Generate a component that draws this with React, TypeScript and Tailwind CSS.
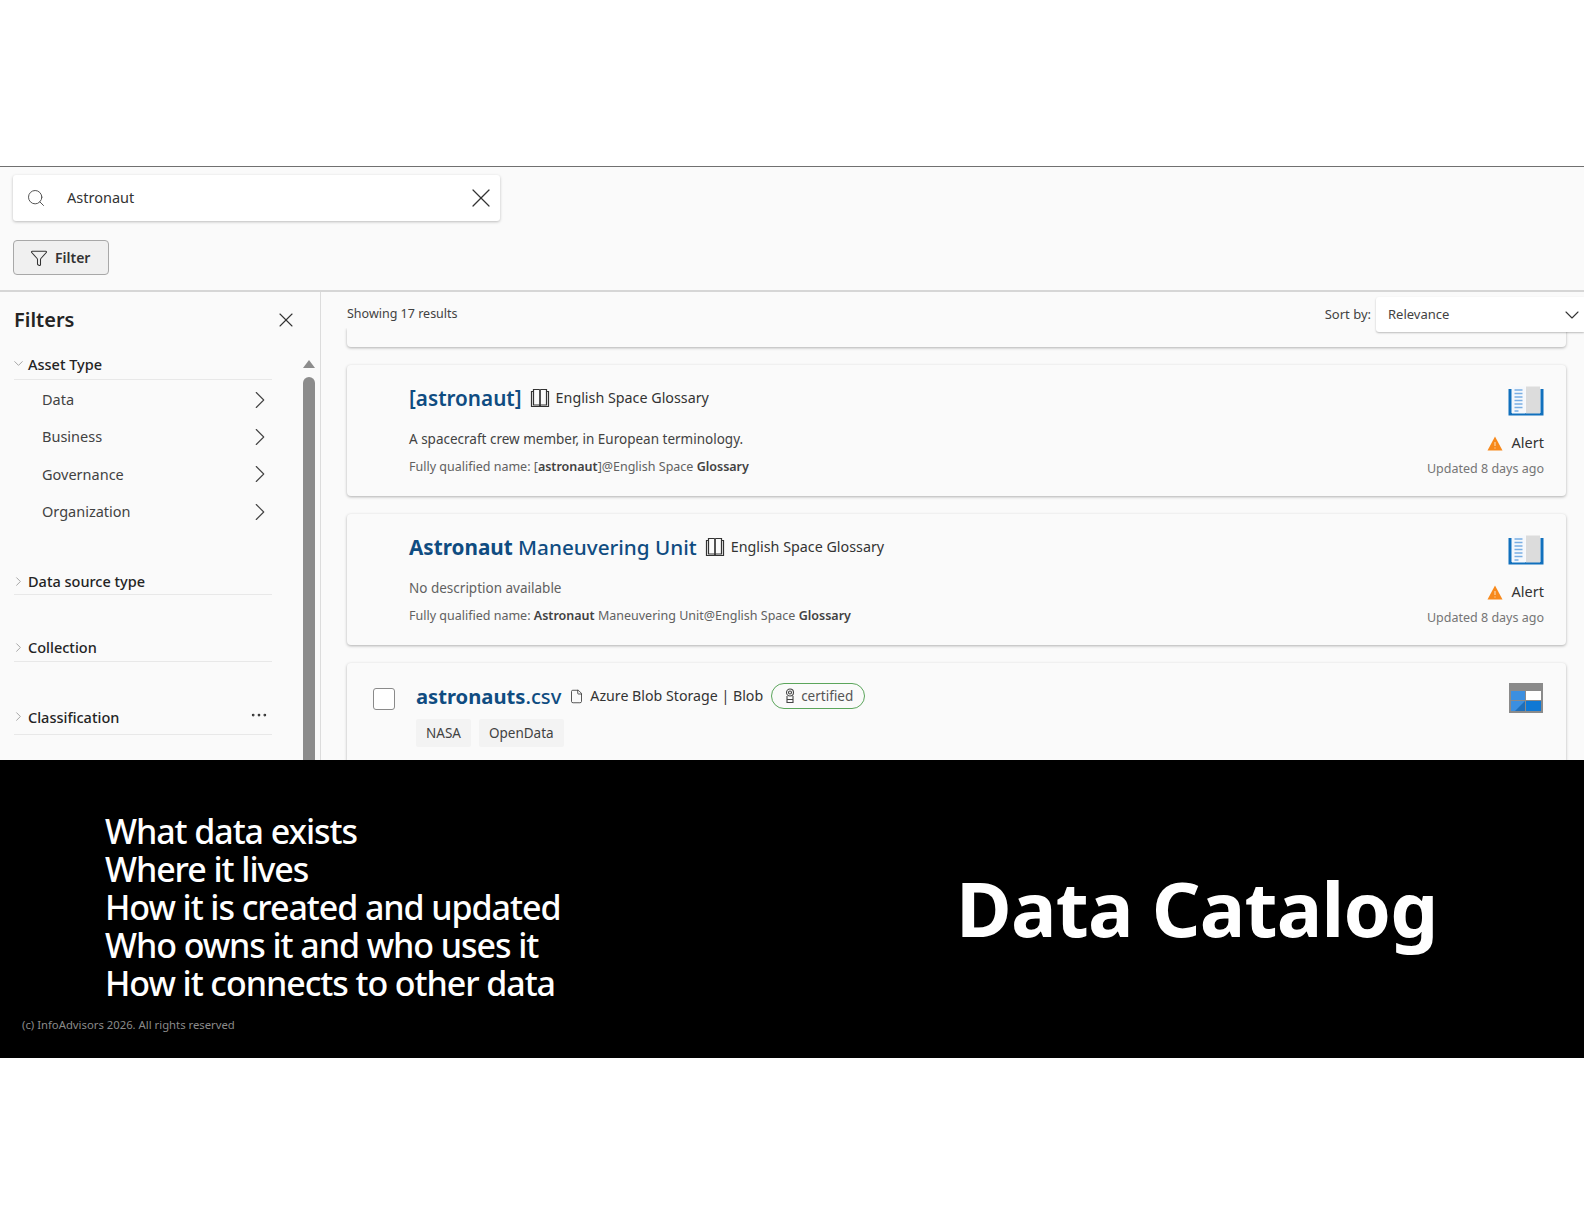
import { ChevronDown, ChevronRight, File, Filter, MoreHorizontal, Search, X } from 'lucide-react';

const ASSET_TYPES = ['Data', 'Business', 'Governance', 'Organization'];

function GlossaryIcon() {
  return (
    <svg width="36" height="31" viewBox="0 0 36 31">
      <path d="M0.500 3v26.500h35V3h-3v24H3.500V3z" fill="#1170bd" />
      <path d="M4 0.500h13.500v27H4z" fill="#f5f8fc" />
      <path d="M18 0.500h14v27H18z" fill="#dcdcdc" />
      <path d="M6.500 4h8M6.500 7.500h8M6.500 11h8M6.500 14.500h8M6.500 18h8M6.500 21.500h8M6.500 25h4" stroke="#7aaee3" strokeWidth="1.500" />
    </svg>
  );
}

function AlertIcon() {
  return (
    <svg width="16" height="15" viewBox="0 0 16 15">
      <path d="M8 0.500 15.500 14.500H0.500z" fill="#f7891c" />
      <path d="M8 6v4M8 11.500v1" stroke="#fde3c4" strokeWidth="1" />
    </svg>
  );
}

function TableIcon() {
  return (
    <svg width="34" height="30" viewBox="0 0 34 30">
      <rect x="0" y="0" width="34" height="30" fill="#8a8a8a" />
      <rect x="2" y="8" width="14" height="9" fill="#3b8fe0" />
      <rect x="17" y="8" width="15" height="9" fill="#ffffff" />
      <rect x="2" y="18" width="14" height="10" fill="#3b8fe0" />
      <rect x="17" y="18" width="15" height="10" fill="#0f78d4" />
      <path d="M6 28 16 18v10z" fill="#1f6fba" />
    </svg>
  );
}

// square two-page book next to the source name
function SourceBookIcon() {
  return (
    <svg width="20" height="20" viewBox="0 0 20 20" fill="none" stroke="#333" strokeWidth="1.200" className="ml-[8px]">
      <path d="M3.500 1.500h5.500c.6 0 1 .4 1 1v15.500c0-.6-.4-1-1-1H3.500z" />
      <path d="M16.500 1.500H11c-.6 0-1 .4-1 1v15.500c0-.6.4-1 1-1h5.500z" />
      <path d="M3.500 3.500H1.500v15h17v-15h-2" />
    </svg>
  );
}

function FilterGroup({ label, className, more }: { label: string; className: string; more?: boolean }) {
  return (
    <div className={`flex items-center border-b border-[#e8e8e8] ml-[14px] w-[258px] ${className}`}>
      <ChevronRight className="w-[15px] h-[15px] -ml-[3px] mr-[2px] text-[#8a8a8a]" strokeWidth={1.200} />
      <span className="text-[14.5px] font-medium text-[#242424] leading-5">{label}</span>
      {more && <MoreHorizontal className="ml-auto mr-[3px] -mt-[3px] w-[20px] h-[20px] text-[#333]" strokeWidth={1.300} />}
    </div>
  );
}

function GlossaryCard({ title, description, qualified }: { title: React.ReactNode; description: React.ReactNode; qualified: React.ReactNode }) {
  return (
    <div className="h-[131px] shrink-0 rounded-[4px] bg-[#fafafa] shadow-[0_1px_3px_rgba(0,0,0,0.3)] flex pl-[62px] pr-[22px]">
      <div className="flex-1 pt-[19px]">
        <div className="flex items-center h-7">
          <span className="text-[20.7px] leading-7 text-[#0f4c81]">{title}</span>
          <SourceBookIcon />
          <span className="ml-[6px] text-[14.3px] text-[#333]">English Space Glossary</span>
        </div>
        <div className="mt-[17px] text-[13.5px] leading-5 text-[#424242]">{description}</div>
        <div className="mt-[8px] text-[12.5px] leading-5 text-[#616161]">{qualified}</div>
      </div>
      <div className="flex flex-col items-end pt-[21px]">
        <GlossaryIcon />
        <div className="flex items-center mt-[16px] h-5">
          <AlertIcon />
          <span className="ml-[9px] text-[14.5px] text-[#333]">Alert</span>
        </div>
        <div className="mt-[6px] text-[12.5px] leading-5 text-[#757575]">Updated 8 days ago</div>
      </div>
    </div>
  );
}

export default function App() {
  return (
    <div className="w-[1584px] h-[1224px] bg-white overflow-hidden font-['Noto_Sans',sans-serif]">
      <div className="h-[167px] border-b border-[#707070]" />
      <div className="bg-[#fafafa]">
        <div className="h-[125px] pt-[8px] pl-[13px] border-b-2 border-[#d6d6d6]">
          <div className="w-[487px] h-[46px] bg-white rounded-[3px] shadow-[0_1px_3px_rgba(0,0,0,0.25)] flex items-center pl-[13px] pr-[3px]">
            <Search className="w-[20px] h-[20px] text-[#555]" strokeWidth={1.200} />
            <span className="ml-[21px] text-[14.5px] text-[#333]">Astronaut</span>
            <X className="ml-auto w-[32px] h-[32px] text-[#333]" strokeWidth={0.900} />
          </div>
          <div className="mt-[19px] w-[96px] h-[35px] bg-[#f0f0f0] border border-[#a8a8a8] rounded-[4px] flex items-center pl-[16px]">
            <Filter className="w-[18px] h-[18px] text-[#333]" strokeWidth={1.400} />
            <span className="ml-[7px] text-[14px] font-semibold text-[#333]">Filter</span>
          </div>
        </div>
        <div className="h-[468px] flex overflow-hidden">
          <aside className="w-[321px] shrink-0 border-r border-[#dcdcdc] flex">
            <div className="w-[303px]">
              <div className="flex items-center justify-between pl-[14px] pr-[5px] pt-[14px]">
                <span className="text-[20px] leading-7 font-semibold text-[#242424]">Filters</span>
                <X className="w-[24px] h-[24px] text-[#333]" strokeWidth={1.100} />
              </div>
              <div className="flex items-center border-b border-[#e8e8e8] ml-[14px] w-[258px] mt-[14px] h-[32px]">
                <ChevronDown className="w-[15px] h-[15px] -ml-[3px] mr-[2px] text-[#8a8a8a]" strokeWidth={1.200} />
                <span className="text-[14.5px] font-medium text-[#242424] leading-5">Asset Type</span>
              </div>
              <div className="ml-[42px] w-[224px] pt-[1px]">
                {ASSET_TYPES.map(t => (
                  <div key={t} className="flex items-center justify-between h-[37.400px]">
                    <span className="text-[14.5px] text-[#424242]">{t}</span>
                    <ChevronRight className="w-[30px] h-[30px] -mr-[9px] text-[#444]" strokeWidth={0.900} />
                  </div>
                ))}
              </div>
              <FilterGroup label="Data source type" className="mt-[38px] h-[26px]" />
              <FilterGroup label="Collection" className="mt-[39px] h-[28px]" />
              <FilterGroup label="Classification" className="mt-[38px] h-[35px]" more />
            </div>
            <div className="w-[12px] flex flex-col items-center pt-[68px]">
              <div className="w-0 h-0 border-x-[6px] border-x-transparent border-b-[8px] border-b-[#8c8c8c]" />
              <div className="mt-[9px] w-[12px] flex-1 rounded-t-[6px] bg-[#8c8c8c]" />
            </div>
          </aside>
          <main className="relative flex-1 pl-[26px] pr-[18px] min-w-0">
            <div className="h-[36px] pt-[12px] text-[12.5px] leading-5 text-[#424242]">Showing 17 results</div>
            <div className="absolute right-0 top-[5px] flex items-center">
              <span className="mr-[5px] text-[13px] text-[#424242]">Sort by:</span>
              <div className="w-[208px] h-[35px] bg-white rounded-l-[3px] shadow-[0_1px_2px_rgba(0,0,0,0.25)] flex items-center justify-between pl-[12px]">
                <span className="text-[13px] text-[#424242]">Relevance</span>
                <ChevronDown className="w-[24px] h-[24px] text-[#333]" strokeWidth={1.100} />
              </div>
            </div>
            {/* bottom of the card scrolled out of view */}
            <div className="overflow-hidden -mx-[4px] px-[4px] pb-[4px] -mb-[4px]">
              <div className="h-[19px] rounded-b-[4px] bg-[#fafafa] shadow-[0_1px_3px_rgba(0,0,0,0.3)]" />
            </div>
            <div className="mt-[18px] flex flex-col gap-[18px]">
              <GlossaryCard
                title={<b className="font-semibold">[astronaut]</b>}
                description="A spacecraft crew member, in European terminology."
                qualified={<>Fully qualified name: [<b className="font-semibold text-[#424242]">astronaut</b>]@English Space <b className="font-semibold text-[#424242]">Glossary</b></>}
              />
              <GlossaryCard
                title={<><b className="font-bold">Astronaut</b> <span className="font-medium">Maneuvering Unit</span></>}
                description={<span className="text-[#616161]">No description available</span>}
                qualified={<>Fully qualified name: <b className="font-semibold text-[#424242]">Astronaut</b> Maneuvering Unit@English Space <b className="font-semibold text-[#424242]">Glossary</b></>}
              />
              <div className="h-[131px] shrink-0 rounded-[4px] bg-[#fafafa] shadow-[0_1px_3px_rgba(0,0,0,0.3)] flex pl-[26px] pr-[23px]">
                <div className="mt-[25px] w-[22px] h-[22px] bg-white border border-[#8a8a8a] rounded-[3px]" />
                <div className="flex-1 ml-[21px] pt-[19px]">
                  <div className="flex items-center h-7">
                    <span className="text-[20.2px] text-[#0f4c81] font-medium"><b className="font-bold">astronauts</b>.csv</span>
                    <File className="ml-[8px] w-[15px] h-[15px] text-[#333]" strokeWidth={1.300} />
                    <span className="ml-[6px] text-[14.2px] text-[#333]">Azure Blob Storage | Blob</span>
                    <span className="ml-[8px] h-[26px] rounded-full border border-[#5ba55b] flex items-center pl-[12px] pr-[11px] text-[13.5px] text-[#555]">
                      <svg width="12" height="16" viewBox="0 0 12 16" fill="none" stroke="#444" strokeWidth="1.100" className="mr-[5px]">
                        <circle cx="6" cy="4.500" r="3.500" />
                        <circle cx="6" cy="4.500" r="1.500" />
                        <path d="M3 8v6.500h6V8M3 11.500h6" />
                      </svg>
                      certified
                    </span>
                  </div>
                  <div className="mt-[9px] flex gap-[8px] text-[13.5px] text-[#424242]">
                    <span className="h-[28px] px-[10px] bg-[#f3f3f3] rounded-[2px] flex items-center">NASA</span>
                    <span className="h-[28px] px-[10px] bg-[#f3f3f3] rounded-[2px] flex items-center">OpenData</span>
                  </div>
                </div>
                <div className="pt-[20px]"><TableIcon /></div>
              </div>
            </div>
          </main>
        </div>
      </div>
      <div className="h-[298px] bg-black flex">
        <div className="w-[956px] shrink-0 pl-[22px] pt-[52px]">
          <div className="pl-[83px] text-[34px] leading-[38px] font-medium tracking-[-1.070px] text-white">
            <div>What data exists</div>
            <div>Where it lives</div>
            <div>How it is created and updated</div>
            <div>Who owns it and who uses it</div>
            <div>How it connects to other data</div>
          </div>
          <div className="mt-[13px] text-[11.300px] leading-5 text-[#8a8a8a]">(c) InfoAdvisors 2026. All rights reserved</div>
        </div>
        <div className="pt-[90px] text-[76px] leading-[116px] font-bold tracking-[-0.750px] text-white whitespace-nowrap">Data Catalog</div>
      </div>
    </div>
  );
}
